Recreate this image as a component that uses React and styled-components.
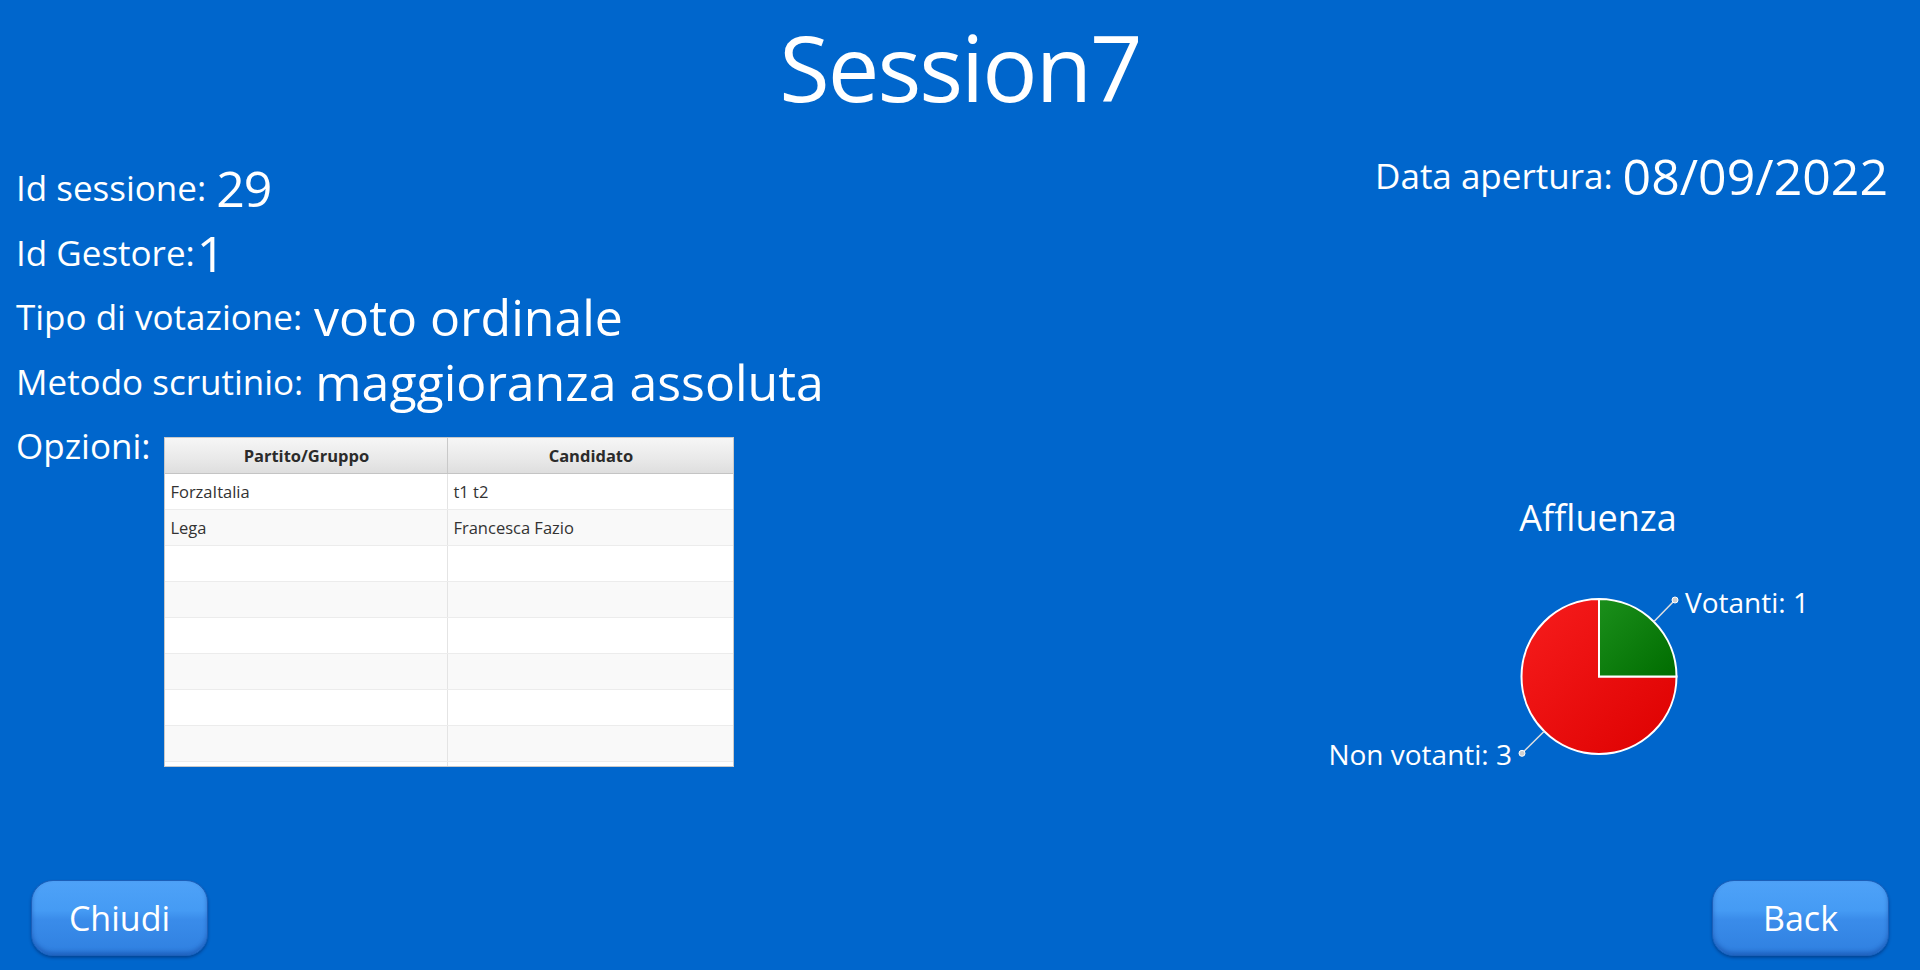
import React from "react";
import styled, { createGlobalStyle } from "styled-components";

const GlobalStyle = createGlobalStyle`
  html, body {
    margin: 0;
    padding: 0;
    background: #0066cc;
    font-family: "Open Sans", "Noto Sans", sans-serif;
    color: #fff;
  }
`;

const Page = styled.div`
  width: 1920px;
  height: 970px;
  display: flex;
  flex-direction: column;
  overflow: hidden;
  background: #0066cc;
`;

const Title = styled.h1`
  margin: 0;
  padding-top: 12px;
  height: 110px;
  line-height: 110px;
  font-size: 92px;
  font-weight: 400;
  letter-spacing: -2px;
  text-align: center;
`;

const Main = styled.div`
  flex: 1;
  display: flex;
  justify-content: space-between;
  padding: 0 32px 0 16px;
`;

const LeftCol = styled.div`
  display: flex;
  flex-direction: column;
  padding-top: 34px;
`;

const InfoRow = styled.div`
  height: 64.6px;
  display: flex;
  align-items: ${(p) => (p.$top ? "flex-start" : "center")};
  gap: ${(p) => p.$gap ?? 10}px;
`;

const Label = styled.span`
  font-size: 35px;
  line-height: 48px;
  white-space: nowrap;
  margin-top: ${(p) => (p.$top ? "8px" : "0")};
`;

const Value = styled.span`
  font-size: ${(p) => p.$size || 50}px;
  line-height: 68px;
  white-space: nowrap;
  letter-spacing: ${(p) => (p.$tight ? "-1px" : "0")};
`;

const TableFrame = styled.div`
  margin-top: 23px;
  width: 570px;
  height: 330px;
  background: #fff;
  border: 1px solid #c9c9c9;
  box-sizing: border-box;
  overflow: hidden;
  font-family: "Open Sans", "Noto Sans", sans-serif;
  color: #333;
`;

const HeaderRow = styled.div`
  display: grid;
  grid-template-columns: 283px 1fr;
  height: 35px;
  background: linear-gradient(to bottom, #f6f6f6 0%, #e9e9e9 60%, #dedede 100%);
  border-bottom: 1px solid #c4c4c4;
`;

const HeaderCell = styled.div`
  display: flex;
  align-items: center;
  justify-content: center;
  font-size: 16.5px;
  font-weight: 700;
  color: #2b2b2b;
  border-right: ${(p) => (p.$last ? "none" : "1px solid #c9c9c9")};
`;

const BodyRow = styled.div`
  display: grid;
  grid-template-columns: 283px 1fr;
  height: 36px;
  box-sizing: border-box;
  background: ${(p) => (p.$alt ? "#f9f9f9" : "#ffffff")};
  border-bottom: 1px solid #ececec;
`;

const Cell = styled.div`
  display: flex;
  align-items: center;
  padding-left: 5px;
  font-size: 16.5px;
  color: #333;
  border-right: ${(p) => (p.$last ? "none" : "1px solid #e4e4e4")};
`;

const RightCol = styled.div`
  display: flex;
  flex-direction: column;
  align-items: flex-end;
  padding-top: 20px;
`;

const DateRow = styled.div`
  height: 68px;
  display: flex;
  align-items: center;
  gap: 10px;
`;

const ChartBox = styled.div`
  width: 540px;
  margin-right: 20px;
  margin-top: 284px;
  display: flex;
  flex-direction: column;
  align-items: center;
`;

const ChartTitle = styled.div`
  font-size: 36px;
  line-height: 48px;
`;

const PieSvg = styled.svg`
  display: block;
  width: 540px;
  height: 240px;
  overflow: visible;
`;

const Footer = styled.div`
  display: flex;
  justify-content: space-between;
  align-items: flex-end;
  padding: 0 31px 14px 31px;
`;

const ActionButton = styled.button`
  width: 177px;
  height: 76px;
  border-radius: 22px;
  border: 1px solid #1c5fb9;
  background: linear-gradient(
    to bottom,
    #4ea2f8 0%,
    #459bf4 40%,
    #3a8cea 52%,
    #2f80e0 100%
  );
  box-shadow: inset 0 -3px 4px rgba(10, 60, 150, 0.45), 0 2px 3px rgba(0, 30, 90, 0.45);
  color: #fff;
  font-family: "Open Sans", "Noto Sans", sans-serif;
  font-size: 34px;
  font-weight: 400;
  padding: 0;
  cursor: pointer;
`;

const options = [
  ["ForzaItalia", "t1 t2"],
  ["Lega", "Francesca Fazio"],
  ["", ""],
  ["", ""],
  ["", ""],
  ["", ""],
  ["", ""],
  ["", ""],
  ["", ""],
];

const PieChart = () => {
  const cx = 271;
  const cy = 134.5;
  const r = 77.5;
  return (
    <PieSvg viewBox="0 0 540 240">
      <defs>
        <linearGradient id="gGreen" x1="0" y1="0" x2="1" y2="1">
          <stop offset="0" stopColor="#1b8f1b" />
          <stop offset="1" stopColor="#006c00" />
        </linearGradient>
        <linearGradient id="gRed" x1="0" y1="0" x2="1" y2="1">
          <stop offset="0" stopColor="#f71d1d" />
          <stop offset="1" stopColor="#dd0000" />
        </linearGradient>
      </defs>
      <path
        d={`M${cx} ${cy} L${cx + r} ${cy} A${r} ${r} 0 1 1 ${cx} ${cy - r} Z`}
        fill="url(#gRed)"
        stroke="#fff"
        strokeWidth="2"
      />
      <path
        d={`M${cx} ${cy} L${cx} ${cy - r} A${r} ${r} 0 0 1 ${cx + r} ${cy} Z`}
        fill="url(#gGreen)"
        stroke="#fff"
        strokeWidth="2"
      />
      <line x1="326" y1="79.5" x2="347" y2="58" stroke="#e0e0e0" strokeWidth="1.5" />
      <circle cx="347" cy="58" r="3" fill="#cfcfcf" stroke="#fff" strokeWidth="1" />
      <text x="357" y="71" fill="#fff" fontSize="28" fontFamily="Open Sans, sans-serif">
        Votanti: 1
      </text>
      <line x1="216" y1="189.5" x2="194" y2="211.3" stroke="#e0e0e0" strokeWidth="1.5" />
      <circle cx="194" cy="211.3" r="3" fill="#cfcfcf" stroke="#fff" strokeWidth="1" />
      <text
        x="184"
        y="223"
        fill="#fff"
        fontSize="28"
        textAnchor="end"
        fontFamily="Open Sans, sans-serif"
      >
        Non votanti: 3
      </text>
    </PieSvg>
  );
};

export default function App() {
  return (
    <>
      <GlobalStyle />
      <Page>
        <Title>Session7</Title>
        <Main>
          <LeftCol>
            <InfoRow $gap={10}>
              <Label>Id sessione:</Label>
              <Value $tight>29</Value>
            </InfoRow>
            <InfoRow $gap={2}>
              <Label>Id Gestore:</Label>
              <Value>1</Value>
            </InfoRow>
            <InfoRow $gap={12}>
              <Label>Tipo di votazione:</Label>
              <Value>voto ordinale</Value>
            </InfoRow>
            <InfoRow $gap={12}>
              <Label>Metodo scrutinio:</Label>
              <Value>maggioranza assoluta</Value>
            </InfoRow>
            <InfoRow $top $gap={14}>
              <Label $top>Opzioni:</Label>
              <TableFrame>
                <HeaderRow>
                  <HeaderCell>Partito/Gruppo</HeaderCell>
                  <HeaderCell $last>Candidato</HeaderCell>
                </HeaderRow>
                {options.map(([party, cand], i) => (
                  <BodyRow key={i} $alt={i % 2 === 1}>
                    <Cell>{party}</Cell>
                    <Cell $last>{cand}</Cell>
                  </BodyRow>
                ))}
              </TableFrame>
            </InfoRow>
          </LeftCol>
          <RightCol>
            <DateRow>
              <Label>Data apertura:</Label>
              <Value>08/09/2022</Value>
            </DateRow>
            <ChartBox>
              <ChartTitle>Affluenza</ChartTitle>
              <PieChart />
            </ChartBox>
          </RightCol>
        </Main>
        <Footer>
          <ActionButton>Chiudi</ActionButton>
          <ActionButton>Back</ActionButton>
        </Footer>
      </Page>
    </>
  );
}
